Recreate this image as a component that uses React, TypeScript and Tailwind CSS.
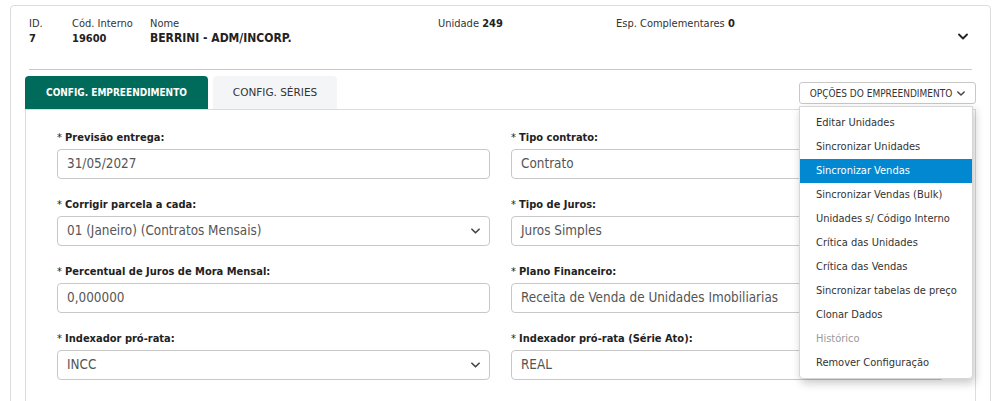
import React from "react";

const font = { fontFamily: '"DejaVu Sans Condensed", "DejaVu Sans", sans-serif' };
const wide = { fontFamily: '"DejaVu Sans", sans-serif' };

function Chevron({ className = "" }: { className?: string }) {
  return (
    <svg viewBox="0 0 10 6" className={className} fill="none">
      <path d="M1 1l4 4 4-4" stroke="currentColor" strokeWidth="1.8" strokeLinecap="round" strokeLinejoin="round" />
    </svg>
  );
}

function Field({ label, value, select }: { label: string; value: string; select?: boolean }) {
  return (
    <div className="flex flex-col">
      <div className="text-[11px] leading-[14px] text-[#222] font-bold h-[14px] mt-[1px]">
        <span className="font-normal">* </span>
        {label}
      </div>
      <div className="mt-[4px] h-[30px] rounded-[4px] border border-[#c8c8c8] bg-white flex items-center pl-[9px] pr-[9px] text-[13.4px] text-[#555]">
        <span className="flex-1 pt-[1px]">{value}</span>
        {select && <Chevron className="w-[9px] h-[6px] text-[#444]" />}
      </div>
    </div>
  );
}

const items = [
  "Editar Unidades",
  "Sincronizar Unidades",
  "Sincronizar Vendas",
  "Sincronizar Vendas (Bulk)",
  "Unidades s/ Código Interno",
  "Crítica das Unidades",
  "Crítica das Vendas",
  "Sincronizar tabelas de preço",
  "Clonar Dados",
  "Histórico",
  "Remover Configuração",
];

export default function App() {
  return (
    <div className="h-[401px] overflow-hidden bg-white pt-[5px] pl-[10px] pr-[11px]" style={font}>
      <div className="rounded-[4px] border border-[#dcdcdc] h-[420px]">
        {/* header */}
        <div className="px-[18px] pt-[10px]">
          <div className="flex items-start text-[11px] text-[#333]">
            <div className="w-[43px]">
              <div className="leading-[15px]">ID.</div>
              <div className="leading-[15px] font-bold text-[#222]">7</div>
            </div>
            <div className="w-[78px]">
              <div className="leading-[15px]">Cód. Interno</div>
              <div className="leading-[15px] font-bold text-[#222]">19600</div>
            </div>
            <div className="w-[288px]">
              <div className="leading-[15px]">Nome</div>
              <div className="leading-[15px] font-bold text-[#222] text-[12px]">BERRINI - ADM/INCORP.</div>
            </div>
            <div className="w-[178px] leading-[15px]">
              Unidade <b className="text-[#222]">249</b>
            </div>
            <div className="flex-1 leading-[15px]">
              Esp. Complementares <b className="text-[#222]">0</b>
            </div>
            <Chevron className="w-[10px] h-[7px] mt-[17px] mr-[4px] text-[#222]" />
          </div>
          <div className="mt-[23px] border-t border-[#c9c9c9]" />
        </div>

        {/* tabs */}
        <div className="pl-[14px] pr-[14px] mt-[6px] relative">
          <div className="flex items-end">
            <div className="w-[183px] h-[33px] rounded-t-[4px] bg-[#006b5a] text-white text-[10px] font-bold flex items-center justify-center">
              CONFIG. EMPREENDIMENTO
            </div>
            <div
              className="ml-[5px] w-[124px] h-[33px] rounded-t-[4px] bg-[#f4f5f7] text-[#333] text-[10.5px] flex items-center justify-center"
              style={wide}
            >
              CONFIG. SÉRIES
            </div>
            <div className="flex-1" />
            <div className="relative self-start mt-[6px]">
              <div className="h-[22px] w-[177px] rounded-[3px] border border-[#c8c8c8] bg-white flex items-center justify-center gap-[5px] text-[10px] text-[#333]">
                OPÇÕES DO EMPREENDIMENTO
                <Chevron className="w-[8px] h-[5px] text-[#444]" />
              </div>
              <div className="absolute left-0 top-[24px] w-[174px] z-10 bg-white border border-[#d6d6d6] rounded-b-[4px] shadow-[2px_4px_10px_rgba(0,0,0,0.22)] pt-[4px] pb-[3px]">
                {items.map((it) => (
                  <div
                    key={it}
                    className={
                      "h-[24px] flex items-center pl-[16px] text-[11px] " +
                      (it === "Sincronizar Vendas"
                        ? "bg-[#0288d1] text-white"
                        : it === "Histórico"
                        ? "text-[#9a9a9a]"
                        : "text-[#333]")
                    }
                  >
                    {it}
                  </div>
                ))}
              </div>
            </div>
          </div>
          <div className="border border-[#dcdcdc] h-[320px] pt-[20px] pl-[31px] pr-[31px]">
            <div className="grid grid-cols-2 gap-x-[21px] gap-y-[18px]">
              <Field label="Previsão entrega:" value="31/05/2027" />
              <Field label="Tipo contrato:" value="Contrato" />
              <Field label="Corrigir parcela a cada:" value="01 (Janeiro) (Contratos Mensais)" select />
              <Field label="Tipo de Juros:" value="Juros Simples" />
              <Field label="Percentual de Juros de Mora Mensal:" value="0,000000" />
              <Field label="Plano Financeiro:" value="Receita de Venda de Unidades Imobiliarias" />
              <Field label="Indexador pró-rata:" value="INCC" select />
              <Field label="Indexador pró-rata (Série Ato):" value="REAL" select />
            </div>
          </div>
        </div>
      </div>
    </div>
  );
}
